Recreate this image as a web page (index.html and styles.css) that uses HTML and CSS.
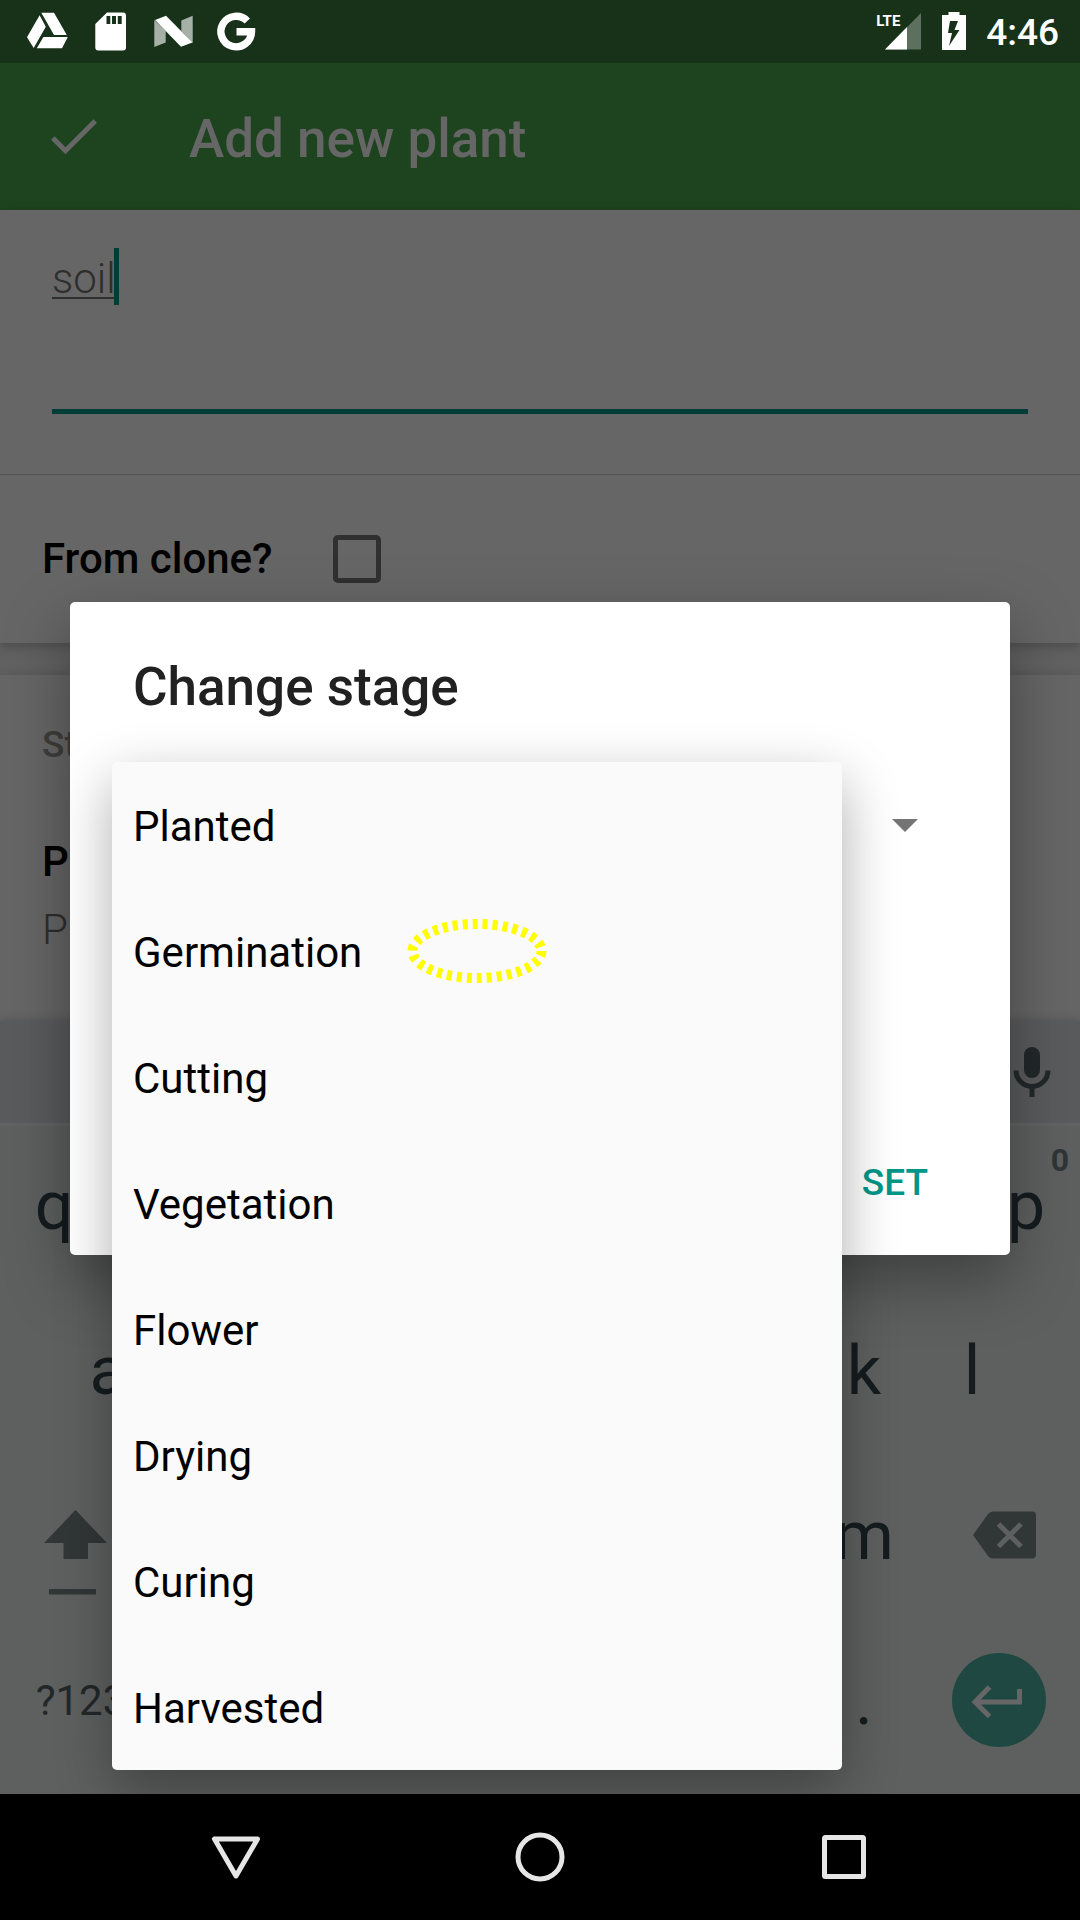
FILE: index.html
```html
<!DOCTYPE html>
<html lang="en">
<head>
<meta charset="utf-8">
<meta name="viewport" content="width=device-width, initial-scale=1">
<title>Add new plant</title>
<link rel="stylesheet" href="styles.css">
</head>
<body>
<div class="screen">
  <header class="status-bar">
    <div class="status-notifications">
      <svg class="status-icon" viewBox="0 0 63 63" aria-hidden="true"><path d="M23.6 15.3 29.8 26.7 17.7 48 11 37.3ZM25.3 12.7H38L50.8 35H38ZM27.4 37H51.8L46 48.3H20.8Z"/></svg>
      <svg class="status-icon" viewBox="0 0 63 63" aria-hidden="true"><path fill-rule="evenodd" d="M28 12.500H44Q47 12.500 47 15.500V47.500Q47 50.500 44 50.500H19.300Q16.300 50.500 16.300 47.500V24ZM27.500 16V24H31.300V16ZM33 16V24H37V16ZM38.800 16V24H42.700V16Z"/></svg>
      <svg class="status-icon" viewBox="0 0 63 63" aria-hidden="true"><path opacity=".62" d="M12.300 20 23.700 31V42.500L12.300 47ZM39.300 20.500 50.700 15.700V43L39.300 31Z"/><path d="M13 20 24 15.800 50.500 42.500 39 46.800Z"/></svg>
      <svg class="status-icon" viewBox="0 0 63 63" aria-hidden="true"><path fill="none" stroke="#fff" stroke-width="7.400" d="M42.300 21A15.300 15.300 0 1 0 46.500 31.700H31.500"/></svg>
    </div>
    <div class="status-system">
      <div class="signal">
        <span class="signal-type">LTE</span>
        <svg class="signal-icon" viewBox="0 0 46 63" aria-hidden="true"><path opacity=".3" d="M45 13V49.500H9Z"/><path d="M31 27V49.500H9Z"/></svg>
      </div>
      <svg class="battery-icon" viewBox="0 0 24 63" aria-hidden="true"><path fill-rule="evenodd" d="M6.500 12H17.500V15H24V50H0V15H6.500ZM8 21 6 33H10L7 46 17.500 30H12.500L16 21Z"/></svg>
      <time class="clock">4:46</time>
    </div>
  </header>

  <div class="app-bar">
    <button class="done" type="button" aria-label="Done"><svg class="done-icon" viewBox="0 0 46 36" aria-hidden="true"><path fill="none" stroke="#666" stroke-width="5" d="M1.800 19 14.500 31.700 44.300 2"/></svg></button>
    <h1 class="app-title">Add new plant</h1>
  </div>

  <main class="form">
    <section class="card">
      <div class="medium-field">
        <textarea class="medium-input" aria-label="Planting medium" spellcheck="false">soil</textarea>
        <span class="caret"></span>
      </div>
      <div class="clone-row">
        <label class="strong-text" for="clone">From clone?</label>
        <input class="clone-box" type="checkbox" id="clone">
      </div>
    </section>
    <section class="card stages">
      <h2 class="stages-title">Stages</h2>
      <p class="strong-text">Planted</p>
      <p class="light-text">Planted</p>
    </section>
  </main>

  <section class="keyboard" aria-label="Keyboard">
    <div class="suggestions">
      <button class="voice" type="button" aria-label="Voice input"><svg class="voice-icon" viewBox="0 0 38 52" aria-hidden="true"><rect x="11" y="1" width="16" height="31" rx="8"/><path fill="none" stroke="#22282a" stroke-width="5" d="M3 24.500A16 16 0 0 0 35 24.500M19 40V51"/></svg></button>
    </div>
    <div class="keys">
      <div class="key-row">
        <button class="key" type="button">q</button>
        <button class="key" type="button" aria-label="w"></button>
        <button class="key" type="button" aria-label="e"></button>
        <button class="key" type="button" aria-label="r"></button>
        <button class="key" type="button" aria-label="t"></button>
        <button class="key" type="button" aria-label="y"></button>
        <button class="key" type="button" aria-label="u"></button>
        <button class="key" type="button" aria-label="i"></button>
        <button class="key" type="button" aria-label="o"></button>
        <button class="key" type="button">p<span class="key-hint">0</span></button>
      </div>
      <div class="key-row key-row-inset">
        <button class="key" type="button">a</button>
        <button class="key" type="button" aria-label="s"></button>
        <button class="key" type="button" aria-label="d"></button>
        <button class="key" type="button" aria-label="f"></button>
        <button class="key" type="button" aria-label="g"></button>
        <button class="key" type="button" aria-label="h"></button>
        <button class="key" type="button" aria-label="j"></button>
        <button class="key" type="button">k</button>
        <button class="key" type="button">l</button>
      </div>
      <div class="key-row">
        <button class="key key-wide" type="button" aria-label="Shift"><svg class="key-icon" viewBox="0 0 162 165" aria-hidden="true"><path d="M75.500 57 107 90H88V106H63.500V90H44ZM49 136H96V141.500H49Z"/></svg></button>
        <button class="key" type="button" aria-label="z"></button>
        <button class="key" type="button" aria-label="x"></button>
        <button class="key" type="button" aria-label="c"></button>
        <button class="key" type="button" aria-label="v"></button>
        <button class="key" type="button" aria-label="b"></button>
        <button class="key" type="button" aria-label="n"></button>
        <button class="key" type="button">m</button>
        <button class="key key-wide" type="button" aria-label="Backspace"><svg class="key-icon" viewBox="0 0 162 165" aria-hidden="true"><path d="M75 58.500H114Q118 58.500 118 62.500V101.500Q118 105.500 114 105.500H75Q72 105.500 70 103L55 82 70 61Q72 58.500 75 58.500Z"/><path fill="none" stroke="#5e605f" stroke-width="5" d="M80.500 71 103 93.500M103 71 80.500 93.500"/></svg></button>
      </div>
      <div class="key-row">
        <button class="key key-wide key-symbols" type="button">?123</button>
        <button class="key" type="button" aria-label="Comma"></button>
        <button class="key key-space" type="button" aria-label="Space"></button>
        <button class="key" type="button">.</button>
        <button class="key key-wide" type="button" aria-label="Enter"><svg class="key-icon" viewBox="0 0 162 165" aria-hidden="true"><circle cx="81" cy="82" r="47" fill="#1f4842"/><path fill="none" stroke="#666" stroke-width="5" d="M71.500 69 57 84 71.500 98.500M58 84H101.500V71"/></svg></button>
      </div>
    </div>
  </section>

  <nav class="nav-bar">
    <button class="nav-button" type="button" aria-label="Back"><svg class="nav-icon" viewBox="0 0 60 60" aria-hidden="true"><path d="M8.500 12H51.500L30 49Z"/></svg></button>
    <button class="nav-button" type="button" aria-label="Home"><svg class="nav-icon" viewBox="0 0 60 60" aria-hidden="true"><circle cx="30" cy="30" r="22"/></svg></button>
    <button class="nav-button" type="button" aria-label="Recent apps"><svg class="nav-icon" viewBox="0 0 60 60" aria-hidden="true"><rect x="10.500" y="10.500" width="39" height="39" rx="1"/></svg></button>
  </nav>

  <div class="dialog-layer">
    <div class="dialog" role="dialog" aria-labelledby="dialog-title">
      <h2 class="dialog-title" id="dialog-title">Change stage</h2>
      <div class="stage-field">
        <select class="stage-select" aria-labelledby="dialog-title"></select>
        <svg class="stage-arrow" viewBox="0 0 26 13" aria-hidden="true"><path d="M0 0H26L13 13Z"/></svg>
      </div>
      <button class="set-button" type="button">SET</button>

      <div class="stage-menu">
        <button class="stage-option" type="button">Planted</button>
        <button class="stage-option" type="button">Germination
          <svg class="touch-mark" viewBox="0 0 140 64" aria-hidden="true"><ellipse cx="70" cy="32" rx="64.500" ry="27"/></svg>
        </button>
        <button class="stage-option" type="button">Cutting</button>
        <button class="stage-option" type="button">Vegetation</button>
        <button class="stage-option" type="button">Flower</button>
        <button class="stage-option" type="button">Drying</button>
        <button class="stage-option" type="button">Curing</button>
        <button class="stage-option" type="button">Harvested</button>
      </div>
    </div>
  </div>
</div>
</body>
</html>
```
FILE: styles.css
```css
* {
  box-sizing: border-box;
}

body {
  margin: 0;
  background: #000;
  font-family: Roboto, "Noto Sans", sans-serif;
  font-size: 42px;
  line-height: 58px;
}

h1, h2, p {
  margin: 0;
}

button {
  padding: 0;
  border: 0;
  background: none;
  color: inherit;
  font: inherit;
}

svg {
  display: block;
}

.screen {
  position: relative;
  display: flex;
  flex-direction: column;
  min-height: 100vh;
  overflow: hidden;
  background: #666;
}

/* Status bar */
.status-bar {
  display: flex;
  justify-content: space-between;
  height: 63px;
  padding: 0 21px 0 16px;
  background: #183119;
  color: #fff;
  fill: #fff;
}

.status-notifications,
.status-system {
  display: flex;
}

.status-system {
  gap: 20px;
}

.status-icon {
  width: 63px;
  height: 63px;
}

.signal {
  position: relative;
}

.signal-icon {
  width: 46px;
  height: 63px;
}

.signal-type {
  position: absolute;
  top: 11px;
  left: 0;
  font-size: 15px;
  font-weight: 700;
  line-height: 20px;
}

.battery-icon {
  width: 24px;
  height: 63px;
}

.clock {
  font-size: 37px;
  font-weight: 500;
  line-height: 66px;
}

/* App bar */
.app-bar {
  display: flex;
  align-items: center;
  gap: 92px;
  height: 147px;
  padding: 0 51px;
  background: #1e441f;
  color: #666;
}

.done-icon {
  width: 46px;
  height: 36px;
}

.app-title {
  padding-top: 4px;
  font-size: 53px;
  font-weight: 500;
  line-height: 64px;
}

/* Form */
.form {
  flex: 1;
  display: flex;
  flex-direction: column;
  gap: 32px;
  background: #626262;
}

.card {
  background: #666;
  box-shadow: 0 3px 12px rgba(0, 0, 0, .25);
}

.medium-field {
  position: relative;
  padding: 40px 52px 60px;
  border-bottom: 1px solid #535353;
}

.medium-input {
  display: block;
  width: 100%;
  height: 164px;
  padding: 0;
  border: 0;
  border-bottom: 5px solid #003d36;
  outline: 0;
  resize: none;
  background: none;
  color: #2e2e2e;
  font: 300 42px/58px Roboto, "Noto Sans", sans-serif;
  text-decoration: underline;
  text-decoration-thickness: 2px;
  text-underline-offset: 4px;
}

.caret {
  position: absolute;
  top: 38px;
  left: 114px;
  width: 5px;
  height: 57px;
  background: #003d36;
}

.clone-row {
  display: flex;
  align-items: center;
  gap: 60px;
  height: 168px;
  padding: 0 42px;
}

.strong-text {
  color: #000;
  font-weight: 500;
}

.clone-box {
  appearance: none;
  width: 48px;
  height: 48px;
  margin: 0;
  border: 5px solid #303030;
  border-radius: 5px;
}

.stages {
  flex: 1;
  padding: 46px 42px 0;
}

.stages-title {
  margin-bottom: 64px;
  color: #403d3a;
  font-size: 37px;
  font-weight: 500;
  line-height: 48px;
}

.light-text {
  margin-top: 10px;
  color: #2e2e2e;
  font-weight: 300;
}

/* Keyboard */
.keyboard {
  position: relative;
  background: #5e605f;
  box-shadow: 0 -2px 8px rgba(0, 0, 0, .15);
  color: #151c1f;
}

.suggestions {
  display: flex;
  justify-content: flex-end;
  align-items: center;
  height: 102px;
  padding-right: 29px;
  background: #5a5b5d;
}

.voice-icon {
  width: 38px;
  height: 52px;
  fill: #22282a;
}

.keys {
  padding-bottom: 11px;
  box-shadow: inset 0 3px #626463;
}

.key-row {
  display: flex;
}

.key-row-inset {
  padding: 0 5%;
}

.key {
  position: relative;
  flex: 2 1 0;
  height: 165px;
  padding-top: 2px;
  font-size: 68px;
  line-height: 163px;
}

.key-wide {
  flex-grow: 3;
  padding-top: 0;
}

.key-space {
  flex-grow: 10;
}

.key-symbols {
  color: #22282a;
  font-size: 42px;
}

.key-hint {
  position: absolute;
  top: 19px;
  right: 11px;
  color: #303435;
  font-size: 32px;
  font-weight: 700;
  line-height: 36px;
}

.key-icon {
  width: 162px;
  height: 165px;
  margin: 0 auto;
  fill: #313637;
}

/* Navigation bar */
.nav-bar {
  position: relative;
  display: flex;
  justify-content: center;
  gap: 24px;
  height: 126px;
  background: #000;
  z-index: 1;
}

.nav-button {
  width: 280px;
}

.nav-icon {
  width: 60px;
  height: 60px;
  margin: 0 auto;
  fill: none;
  stroke: #e6e6e6;
  stroke-width: 5;
  stroke-linejoin: round;
}

/* Dialog */
.dialog-layer {
  position: absolute;
  inset: 63px 0 126px;
  display: flex;
  align-items: center;
  padding: 0 70px;
}

.dialog {
  position: relative;
  display: flex;
  flex-direction: column;
  width: 100%;
  padding: 53px 50px 26px 63px;
  border-radius: 5px;
  background: #fff;
  box-shadow: 0 24px 64px rgba(0, 0, 0, .35);
}

.dialog-title {
  margin-bottom: 43px;
  color: #212121;
  font-size: 53px;
  font-weight: 500;
  line-height: 64px;
}

.stage-field {
  display: flex;
  align-items: center;
  height: 126px;
  padding-right: 42px;
}

.stage-select {
  appearance: none;
  flex: 1;
  height: 126px;
  padding: 0;
  border: 0;
  background: none;
  color: #000;
  font: inherit;
}

.stage-arrow {
  width: 26px;
  height: 13px;
  fill: #757575;
}

.set-button {
  align-self: flex-end;
  height: 94px;
  margin-top: 247px;
  padding: 2px 32px 0;
  color: #009688;
  font-size: 37px;
  font-weight: 500;
}

.stage-menu {
  position: absolute;
  top: 160px;
  left: 42px;
  right: 168px;
  display: flex;
  flex-direction: column;
  border-radius: 5px;
  background: #fafafa;
  box-shadow: 0 20px 56px rgba(0, 0, 0, .32);
}

.stage-option {
  display: flex;
  align-items: center;
  gap: 45px;
  height: 126px;
  padding: 4px 21px 0;
  color: #000;
  text-align: left;
}

.touch-mark {
  width: 140px;
  height: 64px;
  margin-bottom: 4px;
  fill: none;
  stroke: #ff0;
  stroke-width: 10;
  stroke-dasharray: 5 5;
}
```
